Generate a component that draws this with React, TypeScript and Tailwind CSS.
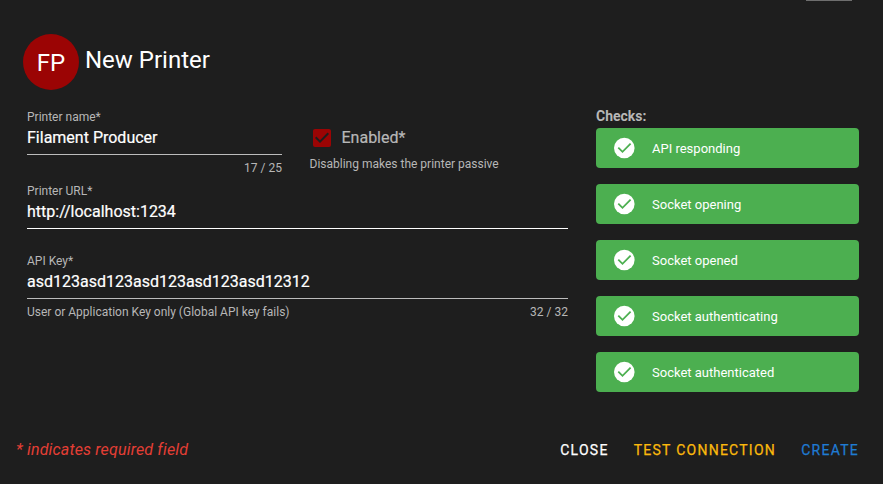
import React from "react";

const checks = ["API responding", "Socket opening", "Socket opened", "Socket authenticating", "Socket authenticated"];

function CheckRow({ label }: { label: string }) {
  return (
    <div className="flex h-10 items-center rounded bg-[#4caf50] pl-4 text-[13px] text-white">
      <svg className="mr-4 size-6" viewBox="0 0 24 24">
        <circle cx="12.3" cy="12" r="10.3" fill="currentColor" />
        <path d="M6.3 11.6L10.5 15.8L18.6 7.7" fill="none" stroke="#4caf50" strokeWidth="1.8" />
      </svg>
      <span className="pt-0.5">{label}</span>
    </div>
  );
}

function Field({ label, value, hint, count, active }: { label: string; value: string; hint?: string; count?: string; active?: boolean }) {
  return (
    <div>
      <div className="h-4 text-xs leading-4 text-[#b7b7b7]">{label}</div>
      <div className={`h-[30px] border-b pt-px text-base leading-6 text-white [-webkit-text-stroke:0.2px] ${active ? "border-white" : "border-[#bcbcbc]"}`}>{value}</div>
      <div className="flex justify-between pt-[5px] text-xs leading-4 text-[#b7b7b7]">
        <span>{hint}</span>
        <span>{count}</span>
      </div>
    </div>
  );
}

export default function App() {
  return (
    <div className="flex h-[484px] w-[883px] flex-col overflow-hidden bg-[#1e1e1e] font-['Roboto',sans-serif] text-white">
      <div className="ml-[806px] h-px w-[46px] shrink-0 bg-[#6e6e6e]" />
      <header className="mt-[33px] ml-[23px] flex h-14 items-center">
        <div className="flex size-14 items-center justify-center rounded-full bg-[#9b0404] pt-px text-2xl">FP</div>
        <h1 className="ml-1.5 pb-1 text-2xl">New Printer</h1>
      </header>
      <main className="mt-[18px] flex h-[320px] pl-[27px]">
        <div className="w-[541px]">
          <div className="flex h-[74px] pt-px">
            <div className="w-[255px]">
              <Field label="Printer name*" value="Filament Producer" count="17 / 25" />
            </div>
            <div className="ml-[27.5px]">
              <div className="mt-[17px] flex h-6 items-center">
                <svg className="size-6 text-[#9b0404]" viewBox="0 0 24 24" fill="currentColor">
                  <path d="M10,17L5,12L6.41,10.58L10,14.17L17.59,6.58L19,8M19,3H5C3.89,3 3,3.89 3,5V19A2,2 0 0,0 5,21H19A2,2 0 0,0 21,19V5C21,3.89 20.1,3 19,3Z" />
                </svg>
                <span className="ml-2 text-base text-[#b7b7b7] [-webkit-text-stroke:0.2px]">Enabled*</span>
              </div>
              <div className="mt-1.5 text-xs leading-4 text-[#b7b7b7]">Disabling makes the printer passive</div>
            </div>
          </div>
          <div className="h-[70px] pt-px">
            <Field label="Printer URL*" value="http://localhost:1234" active />
          </div>
          <div className="pt-px">
            <Field label="API Key*" value="asd123asd123asd123asd123asd12312" hint="User or Application Key only (Global API key fails)" count="32 / 32" />
          </div>
        </div>
        <div className="ml-7 w-[263px]">
          <div className="h-5 text-sm leading-[17px] font-bold text-[#b7b7b7]">Checks:</div>
          <div className="flex flex-col gap-4">
            {checks.map((c) => <CheckRow key={c} label={c} />)}
          </div>
        </div>
      </main>
      <footer className="mt-[10px] flex h-6 items-center pl-4 pr-6">
        <em className="grow text-base tracking-[0.17px] text-[#e53e35]">* indicates required field</em>
        <div className="flex text-sm tracking-[1.25px] [-webkit-text-stroke:0.25px]">
          <span className="w-[73.5px]">CLOSE</span>
          <span className="w-[167.5px] text-[#fbb90c]">TEST CONNECTION</span>
          <span className="text-[#1f7bd3]">CREATE</span>
        </div>
      </footer>
    </div>
  );
}
